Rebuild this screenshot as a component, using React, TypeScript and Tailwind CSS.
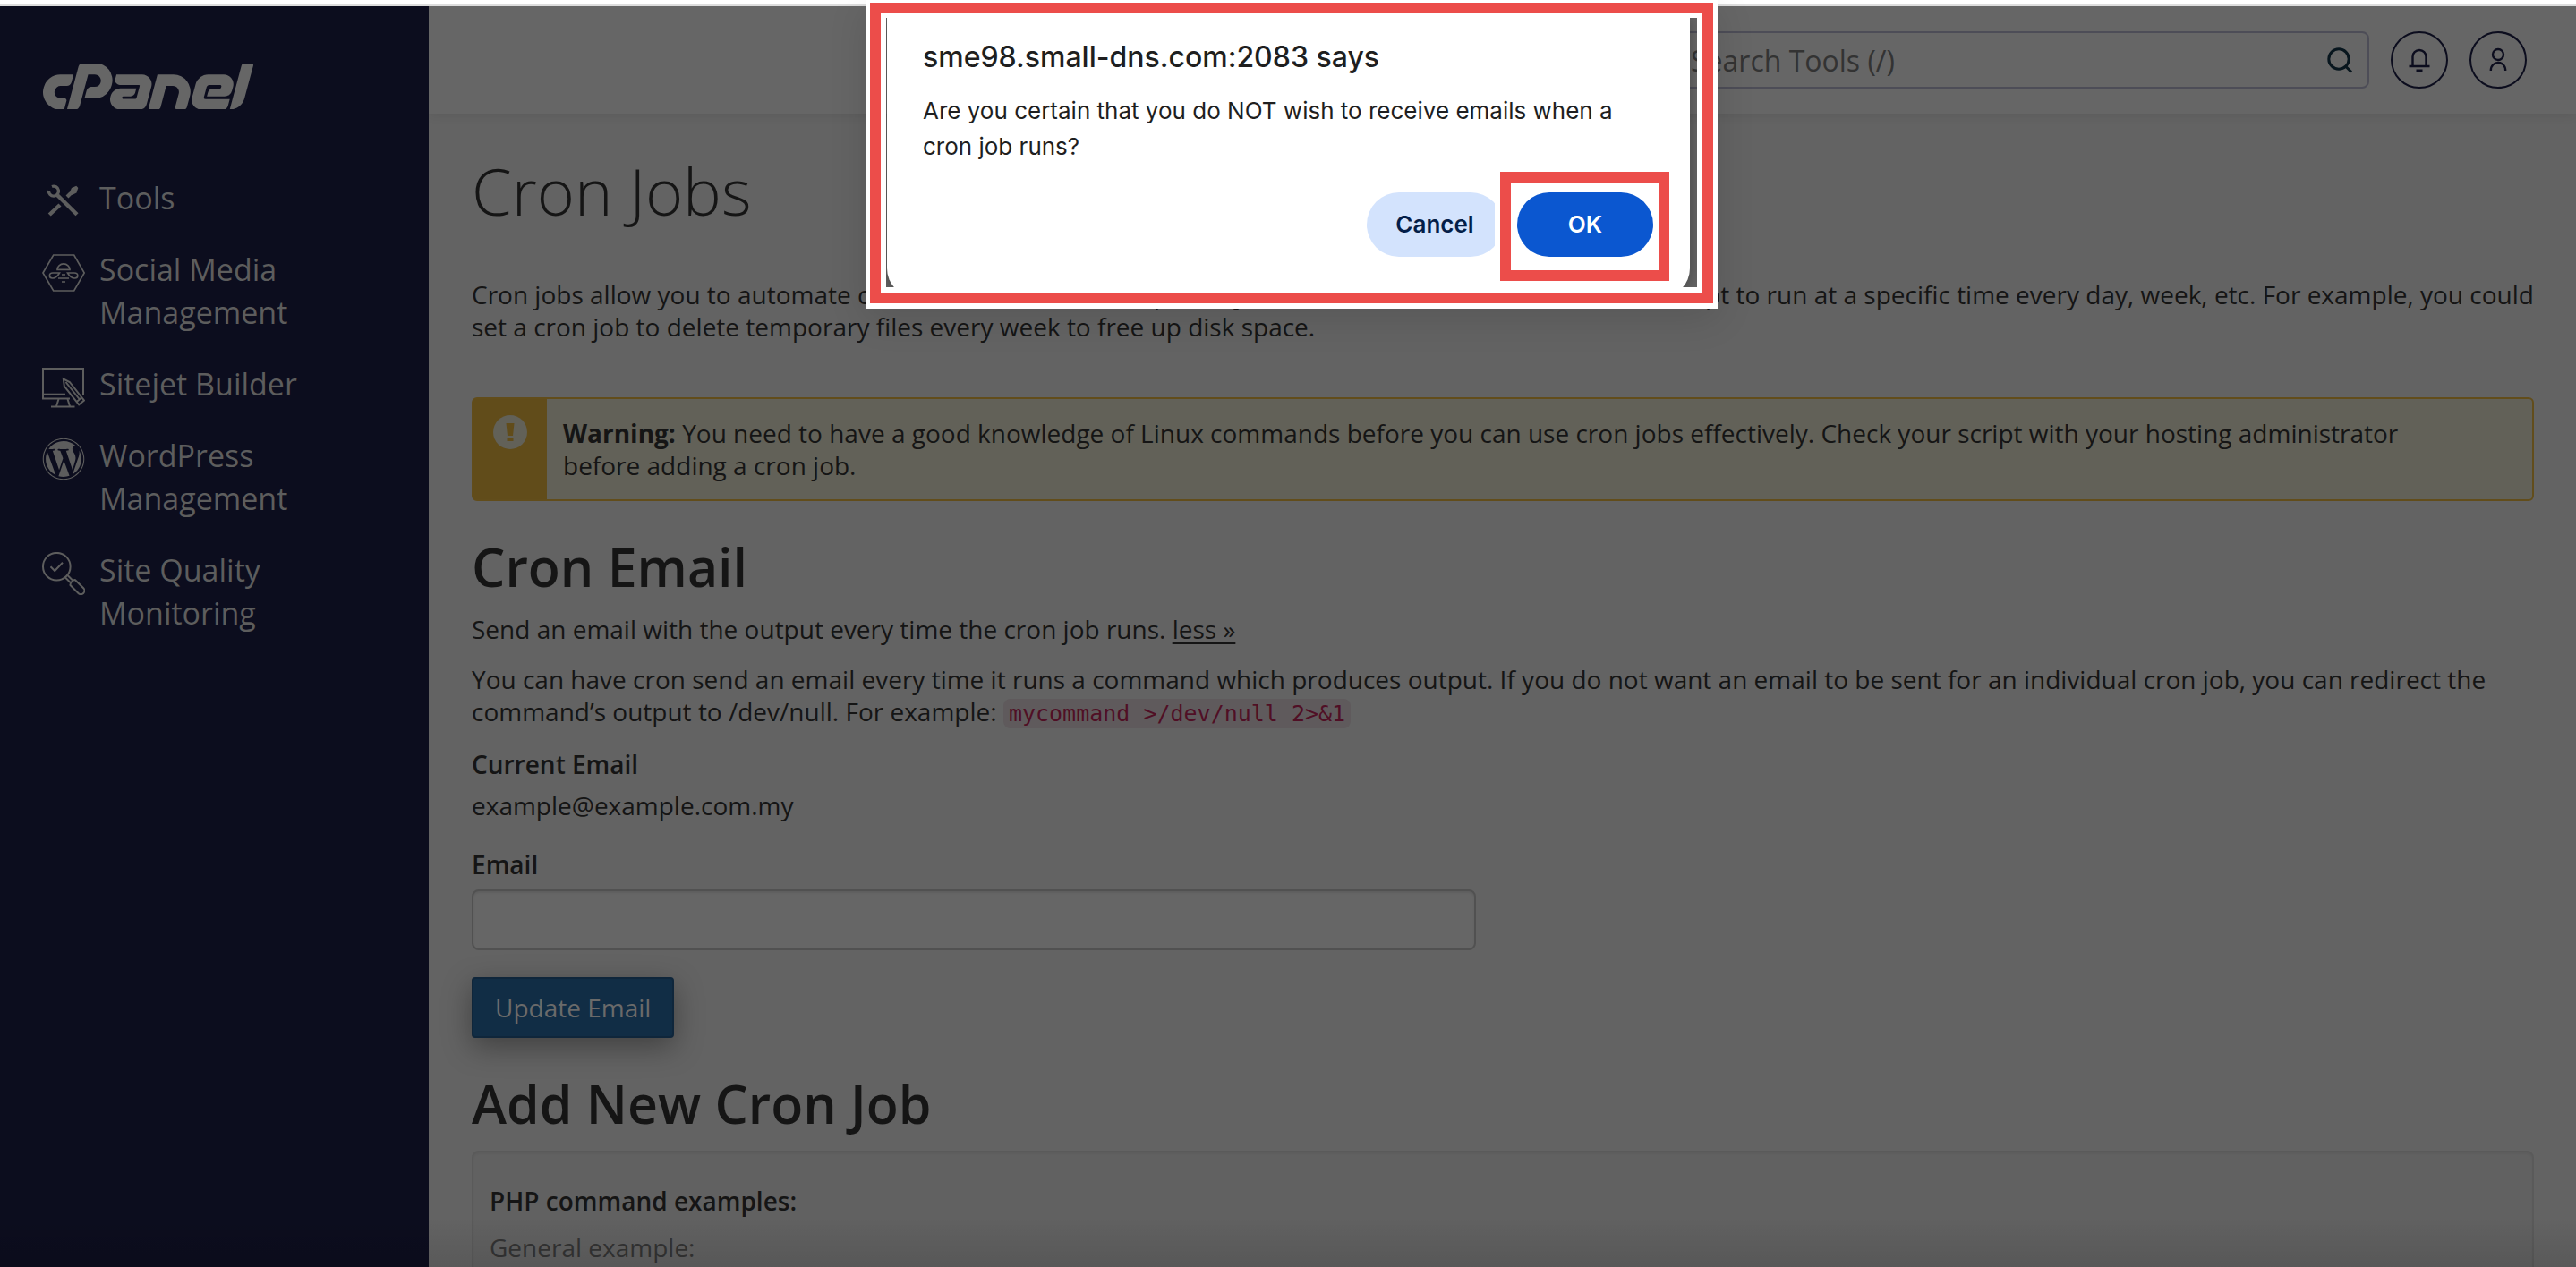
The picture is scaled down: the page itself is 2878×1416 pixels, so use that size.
import type { ReactNode } from "react";
import { FaWordpress } from "react-icons/fa";
import { SiCpanel } from "react-icons/si";

function ToolsIcon() {
  return (
    <svg viewBox="0 0 48 48" className="size-12" fill="none" stroke="currentColor">
      <path d="M11 7.5A5.5 5.5 0 1 1 7.5 12" strokeWidth="3.4" />
      <path d="M17 17 L39 38.8" strokeWidth="4.4" />
      <path d="M20 28 L8.2 39" strokeWidth="4.4" />
      <path d="M28 19 L32 15" strokeWidth="4" />
      <path d="M30.5 14.5 L33 9 L38.3 6.8 L40.3 9 L38.5 14.5 L33.5 17z" fill="currentColor" stroke="none" />
    </svg>
  );
}

function BeeIcon() {
  return (
    <svg viewBox="0 0 48 48" className="size-12" fill="none" stroke="currentColor" strokeWidth="1.7">
      <path d="M1 24 L12.7 4 H35.7 L47.2 24 L35.7 44 H12.7z" />
      <path d="M17 20.3 a7 6.4 0 0 1 14 0z" />
      <path d="M19.5 24 H12 C9 24 8.4 25.6 8.4 27 C8.4 29 10 30 11.8 30 C15 30 17.5 27.5 19.5 24z" />
      <path d="M28.5 24 H36 C39 24 39.8 25.6 39.8 27 C39.8 29 38 30 36.3 30 C33 30 30.5 27.5 28.5 24z" />
      <path d="M22 26 H26 M18 30 H30 M22 34 H26" />
    </svg>
  );
}

function SitejetIcon() {
  return (
    <svg viewBox="0 0 48 48" className="size-12" fill="none" stroke="currentColor" strokeWidth="2">
      <path d="M46 32 V3 H1 V36.5 H31" />
      <path d="M1 31.7 H26" />
      <path d="M18.5 37 L16 45 M28.5 37 L31 45 M10 45.5 H36.5" />
      <path d="M23.8 14.5 L24.8 22.5 L41.2 43.3 L47 38.6 L30.8 18z" />
      <path d="M26.5 18 L42 37.5 M38.7 40 L44.3 35.3" />
    </svg>
  );
}

function QualityIcon() {
  return (
    <svg viewBox="0 0 48 48" className="size-12" fill="none" stroke="currentColor" strokeWidth="2">
      <circle cx="16.3" cy="16.2" r="15.3" />
      <path d="M9.5 16.3 L14.2 21 L23 11.7" />
      <path d="M25.8 28.3 L31.5 34 M28.3 25.8 L34 31.5" />
      <path d="M31.5 37 L40.5 46 a4 4 0 0 0 5.7 -5.7 L37 31.2 C35 30.5 31 34.5 31.5 37z" />
    </svg>
  );
}

const navItems: { label: string; icon: ReactNode }[] = [
  { label: "Tools", icon: <ToolsIcon /> },
  { label: "Social Media Management", icon: <BeeIcon /> },
  { label: "Sitejet Builder", icon: <SitejetIcon /> },
  { label: "WordPress Management", icon: <FaWordpress className="size-12" /> },
  { label: "Site Quality Monitoring", icon: <QualityIcon /> },
];

function Sidebar() {
  return (
    <aside className="w-[479px] shrink-0 bg-[#0c0d1e] text-[#5d5d5d]">
      <a href="#" aria-label="cPanel" className="mt-16 ml-12 block w-[235px] text-[#666666]">
        <SiCpanel viewBox="0 9.4 24 5.2" className="h-[51px] w-[235px]" />
      </a>
      <nav className="mt-[75px] ml-[47px] flex flex-col gap-8">
        {navItems.map((item) => (
          <a key={item.label} href="#" className="flex gap-4 text-[34px] leading-[48px]">
            <span className="mt-1 -mb-1 size-12 shrink-0">{item.icon}</span>
            <span className="w-[260px]">{item.label}</span>
          </a>
        ))}
      </nav>
    </aside>
  );
}

function Header() {
  return (
    <header className="relative flex h-[120px] shrink-0 items-start justify-end gap-6 bg-[#666666] pt-7 pr-[55px] shadow-[0_2px_12px_rgba(0,0,0,0.08)]">
      <div className="flex h-16 w-[782px] items-center rounded-lg border-2 border-[#4d4d57] pr-4 pl-[22px]">
        <input
          type="text"
          aria-label="Search Tools"
          placeholder="Search Tools (/)"
          className="min-w-0 flex-1 bg-transparent pt-0.5 text-[32px] text-[#333333] outline-none placeholder:text-[#333333]"
        />
        <svg viewBox="0 0 30 30" className="size-[30px]" fill="none" stroke="#08161e" strokeWidth="3">
          <circle cx="14" cy="14" r="11.2" />
          <path d="M21.5 22 L28 28.5" />
        </svg>
      </div>
      <button aria-label="Notifications" className="flex size-16 items-center justify-center rounded-full border-2 border-[#0c0d1e]">
        <svg viewBox="0 0 28 28" className="size-7" fill="none" stroke="#0c0d1e" strokeWidth="2.4">
          <path d="M6.5 21 V10.5 a7.5 7.5 0 0 1 15 0 V21" />
          <path d="M2.5 21 H25.5 M10.5 25.8 H17.5" />
        </svg>
      </button>
      <button aria-label="Account" className="flex size-16 items-center justify-center rounded-full border-2 border-[#0c0d1e]">
        <svg viewBox="0 0 28 28" className="size-7" fill="none" stroke="#0c0d1e" strokeWidth="2.4">
          <circle cx="14" cy="8" r="6" />
          <path d="M5.8 26 C5.8 14 22.2 14 22.2 26" />
        </svg>
      </button>
    </header>
  );
}

function Warning() {
  return (
    <div className="mt-[61px] flex rounded-md border-2 border-[#624d1b] bg-[#626158]">
      <div className="flex w-[82px] shrink-0 justify-center bg-[#614c1a] pt-[18px]">
        <svg viewBox="0 0 38 38" className="size-[38px]">
          <circle cx="19" cy="19" r="19" fill="#626158" />
          <path d="M14.5 9 H23.5 L22 23 H16z" fill="#614c1a" />
          <rect x="15.5" y="25" width="7" height="4" fill="#614c1a" />
        </svg>
      </div>
      <p className="py-5 pr-20 pl-[18px]">
        <strong className="font-bold">Warning:</strong> You need to have a good knowledge of Linux commands before you
        can use cron jobs effectively. Check your script with your hosting administrator before adding a cron job.
      </p>
    </div>
  );
}

function CronEmail() {
  return (
    <section>
      <h2 className="mt-10 text-[59px] leading-[66px] font-semibold">Cron Email</h2>
      <p className="mt-[19px]">
        Send an email with the output every time the cron job runs.{" "}
        <a href="#" className="underline underline-offset-4">
          less »
        </a>
      </p>
      <p className="mt-5">
        You can have cron send an email every time it runs a command which produces output. If you do not want an email
        to be sent for an individual cron job, you can redirect the command’s output to /dev/null. For example:{" "}
        <code className="rounded-lg bg-[#5f5a5c] px-1.5 py-0.5 font-['DejaVu_Sans_Mono',monospace] text-[25px] text-[#500f25]">
          mycommand &gt;/dev/null 2&gt;&amp;1
        </code>
      </p>
      <p className="mt-5 font-semibold">Current Email</p>
      <p className="mt-[10px]">example@example.com.my</p>
      <form className="mt-[30px]">
        <label htmlFor="email" className="block font-semibold">
          Email
        </label>
        <div className="mt-[10px] grid grid-cols-2 gap-[60px]">
          <input
            id="email"
            type="text"
            className="h-[68px] rounded-lg border-2 border-[#515151] bg-[#666666] px-6 shadow-[inset_0_2px_2px_rgba(0,0,0,0.08)] outline-none"
          />
        </div>
        <button
          type="button"
          className="mt-[30px] block h-[68px] rounded-sm border-2 border-[#0f263b] bg-[#112d45] px-6 text-[#6a6a6a] shadow-[0_10px_32px_rgba(0,0,0,0.35)]"
        >
          Update Email
        </button>
      </form>
    </section>
  );
}

function AddCronJob() {
  return (
    <section>
      <h2 className="mt-10 text-[59px] leading-[66px] font-semibold">Add New Cron Job</h2>
      <div className="mt-5 rounded-lg border-2 border-[#5a5a5a] bg-[#616161] px-[18px] pt-9 pb-40 shadow-[inset_0_2px_2px_rgba(0,0,0,0.04)]">
        <p className="font-semibold">PHP command examples:</p>
        <p className="mt-4 text-[#333333]">General example:</p>
      </div>
    </section>
  );
}

function ConfirmDialog() {
  return (
    <div className="absolute inset-x-0 top-0 flex justify-center pl-2">
      {/* white edge, red highlight, white edge */}
      <div className="w-[952px] border-x-[5px] border-t-[3px] border-b-[6px] border-white shadow-[0_10px_40px_rgba(0,0,0,0.12)]">
        <div className="border-12 border-[#ec4d4a]">
          <div className="h-[312px] overflow-hidden border-x-[6px] border-t-[5px] border-b-[6px] border-white">
            <div
              role="dialog"
              aria-labelledby="dialog-title"
              className="mr-2 ml-px h-[312px] rounded-b-[32px] bg-white pt-6 pr-[41px] pl-10 font-[Inter,sans-serif] text-[#1f1f1f] shadow-[0_0_16px_rgba(0,0,0,0.3)]"
            >
              <h1 id="dialog-title" className="text-[32px] leading-10 font-medium">
                sme98.small-dns.com:2083 says
              </h1>
              <p className="mt-5 text-[26px] leading-10">
                Are you certain that you do NOT wish to receive emails when a cron job runs?
              </p>
              <div className="mt-[31px] flex justify-end gap-4 text-[26px] font-semibold">
                <button className="h-[72px] w-[152px] rounded-full bg-[#d3e3fd] text-[#041e49]">Cancel</button>
                <div className="relative">
                  <div className="absolute -top-[23px] -right-[18px] -bottom-[27px] -left-[25px] border-l-[6px] border-white">
                    <div className="h-full border-12 border-[#ec4d4a] bg-white" />
                  </div>
                  <button className="relative h-[72px] w-[152px] rounded-full bg-[#0b57d0] text-white">OK</button>
                </div>
              </div>
            </div>
          </div>
        </div>
      </div>
    </div>
  );
}

export default function App() {
  return (
    <div className="relative flex h-dvh flex-col overflow-hidden bg-white pt-[5px] font-['Open_Sans',sans-serif] text-[28px] leading-9 text-[#151515]">
      <div className="flex min-h-0 flex-1 border-t-2 border-[#dddddd]">
        <Sidebar />
        <div className="flex min-w-0 flex-1 flex-col overflow-hidden bg-[#636363]">
          <Header />
          <main className="pt-[46px] pr-[47px] pl-12">
            <h1 className="text-[72px] leading-[80px] font-light">Cron Jobs</h1>
            <p className="-mr-5 mt-[58px]">
              Cron jobs allow you to automate certain commands or scripts on your site. You can set a command or script
              to run at a specific time every day, week, etc. For example, you could set a cron job to delete temporary
              files every week to free up disk space.
            </p>
            <Warning />
            <CronEmail />
            <AddCronJob />
          </main>
        </div>
      </div>
      <div className="pointer-events-none absolute inset-x-0 bottom-0 h-14 bg-linear-to-t from-black/10 to-transparent" />
      <ConfirmDialog />
    </div>
  );
}
